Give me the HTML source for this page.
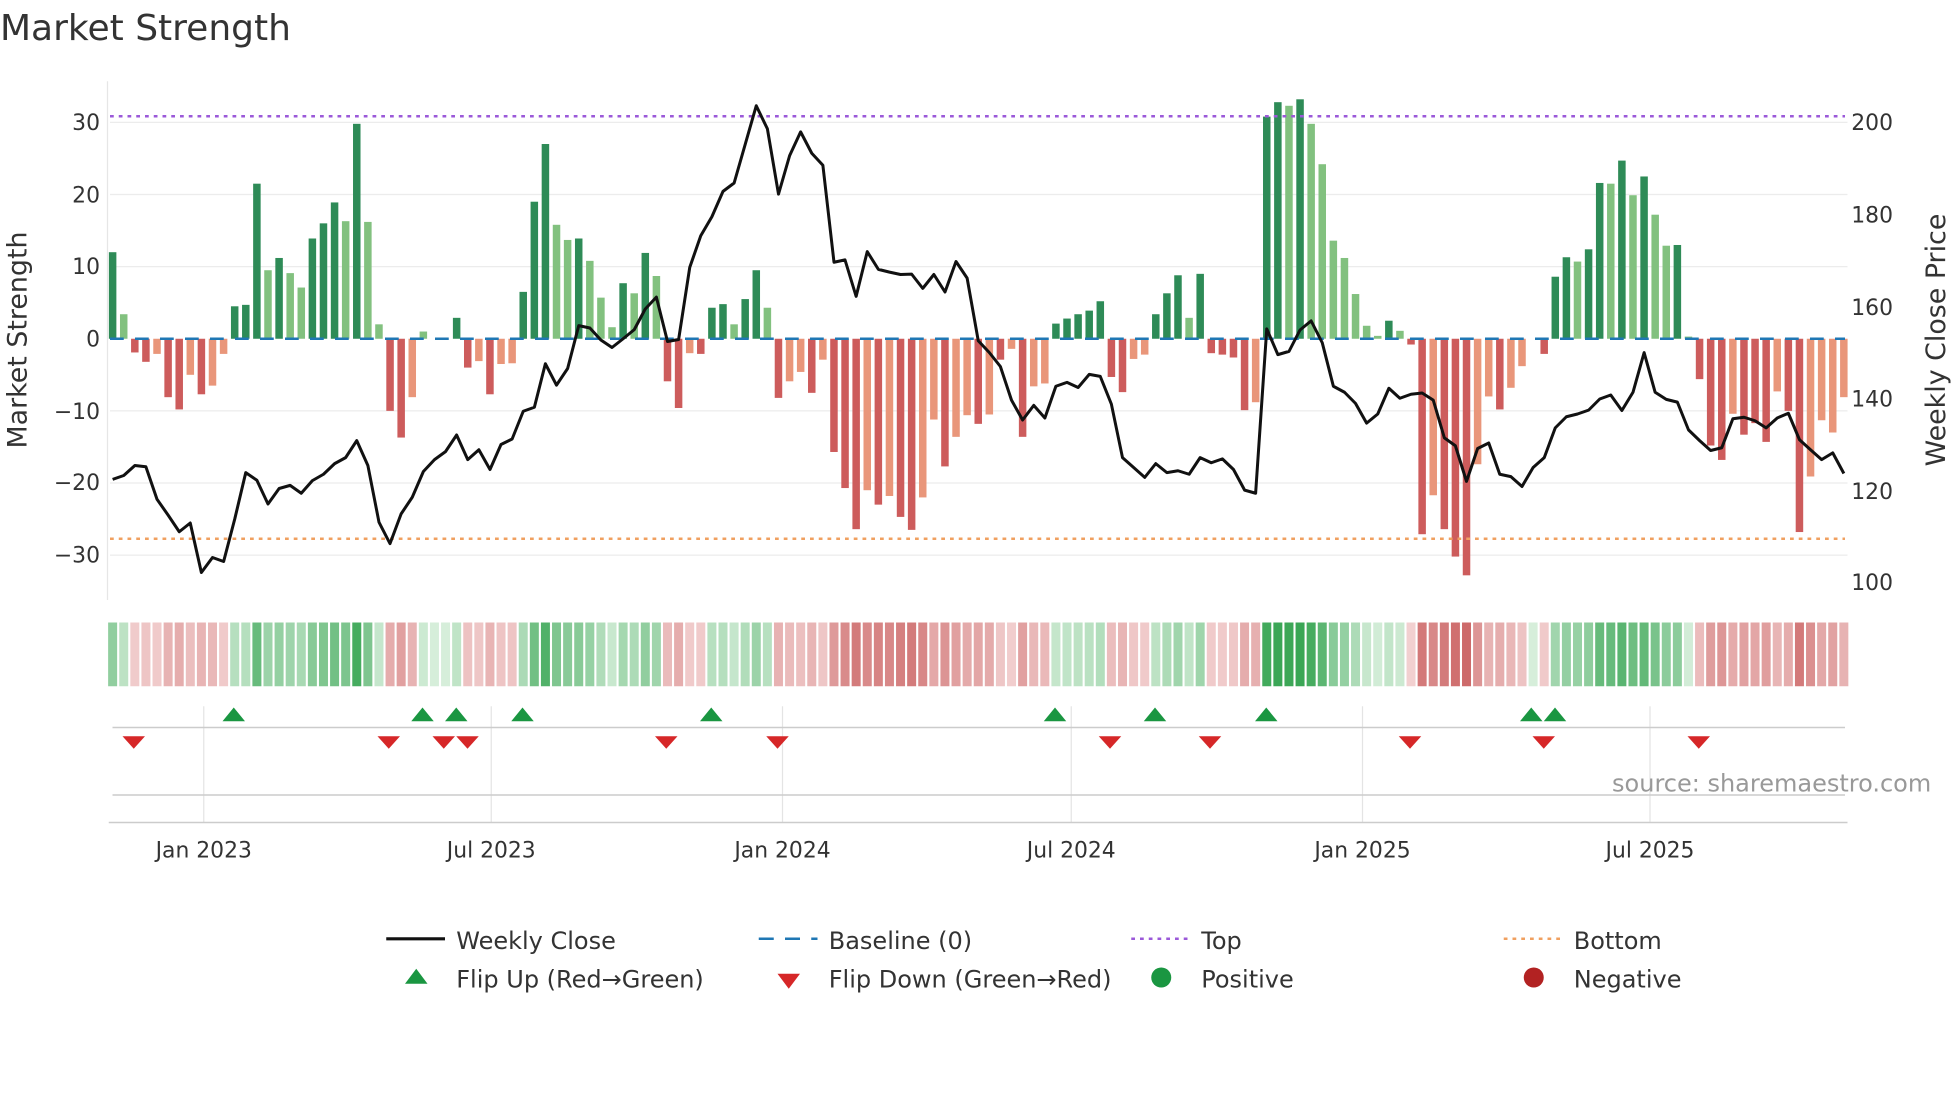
<!DOCTYPE html>
<html><head><meta charset="utf-8"><style>
html,body{margin:0;padding:0;background:#fff;}
svg{display:block;font-family:"DejaVu Sans","Liberation Sans",sans-serif;}
</style></head><body>
<svg id="s" width="1960" height="1102" viewBox="0 0 1568 881.6" xmlns="http://www.w3.org/2000/svg">
<text x="0" y="32" font-size="28.8" fill="#333">Market Strength</text>
<g id="grid" stroke="#ececec" stroke-width="1"></g>
<line x1="86" y1="65" x2="86" y2="480" stroke="#e6e6e6"/>
<g font-size="17.5" fill="#333" text-anchor="end">
<text x="80" y="104">30</text><text x="80" y="162">20</text><text x="80" y="219">10</text><text x="80" y="277">0</text>
<text x="80" y="335">−10</text><text x="80" y="392">−20</text><text x="80" y="450">−30</text>
</g>
<g font-size="17.5" fill="#333">
<text x="1481" y="104">200</text><text x="1481" y="178">180</text><text x="1481" y="252">160</text>
<text x="1481" y="325">140</text><text x="1481" y="399">120</text><text x="1481" y="472">100</text>
</g>
<text transform="translate(21,272) rotate(-90)" font-size="21.5" fill="#333" text-anchor="middle">Market Strength</text>
<text transform="translate(1556,272) rotate(-90)" font-size="21.5" fill="#333" text-anchor="middle">Weekly Close Price</text>
<g id="bars"></g>
<line x1="88" y1="93" x2="1476" y2="93" stroke="#9b59d9" stroke-width="2" stroke-dasharray="3,4"/>
<line x1="88" y1="431" x2="1476" y2="431" stroke="#f0a060" stroke-width="2" stroke-dasharray="3,4"/>
<line x1="88" y1="271" x2="1476" y2="271" stroke="#1f77b4" stroke-width="2" stroke-dasharray="11,9"/>
<polyline id="pl" fill="none" stroke="#111" stroke-width="2.4" stroke-linejoin="round"/>
<g id="heat"></g>
<g stroke="#e4e4e4"><line x1="163" y1="565" x2="163" y2="658"/><line x1="393" y1="565" x2="393" y2="658"/><line x1="626" y1="565" x2="626" y2="658"/><line x1="857" y1="565" x2="857" y2="658"/><line x1="1090" y1="565" x2="1090" y2="658"/><line x1="1320" y1="565" x2="1320" y2="658"/></g>
<line x1="90" y1="582" x2="1476" y2="582" stroke="#ccc" stroke-width="1.2"/>
<line x1="90" y1="636" x2="1476" y2="636" stroke="#ccc" stroke-width="1.2"/>
<line x1="87" y1="658" x2="1478" y2="658" stroke="#ccc" stroke-width="1.2"/>
<g id="mk"></g>
<text x="1545" y="633" font-size="19.2" fill="#999" text-anchor="end">source: sharemaestro.com</text>
<g font-size="17.5" fill="#333" text-anchor="middle">
<text x="163" y="686">Jan 2023</text><text x="393" y="686">Jul 2023</text><text x="626" y="686">Jan 2024</text>
<text x="857" y="686">Jul 2024</text><text x="1090" y="686">Jan 2025</text><text x="1320" y="686">Jul 2025</text>
</g>
<g font-size="19.2" fill="#333">
<line x1="309" y1="751" x2="356" y2="751" stroke="#111" stroke-width="2.5"/><text x="365" y="759">Weekly Close</text>
<line x1="607" y1="751" x2="654" y2="751" stroke="#1f77b4" stroke-width="2" stroke-dasharray="12,9"/><text x="663" y="759">Baseline (0)</text>
<line x1="905" y1="751" x2="952" y2="751" stroke="#9b59d9" stroke-width="2" stroke-dasharray="3,4"/><text x="961" y="759">Top</text>
<line x1="1203" y1="751" x2="1250" y2="751" stroke="#f0a060" stroke-width="2" stroke-dasharray="3,4"/><text x="1259" y="759">Bottom</text>
<polygon points="333,775 342,787 324,787" fill="#1a9641"/><text x="365" y="790">Flip Up (Red→Green)</text>
<polygon points="622,779 640,779 631,791" fill="#d62728"/><text x="663" y="790">Flip Down (Green→Red)</text>
<circle cx="929" cy="782" r="8" fill="#1a9641"/><text x="961" y="790">Positive</text>
<circle cx="1227" cy="782" r="8" fill="#b22222"/><text x="1259" y="790">Negative</text>
</g>
</svg>
<script>
var NS="http://www.w3.org/2000/svg";
function el(t,a,p){var e=document.createElementNS(NS,t);for(var k in a)e.setAttribute(k,a[k]);document.getElementById(p).appendChild(e);return e;}
var V=[12,3.4,-1.9,-3.2,-2.1,-8.1,-9.8,-5,-7.7,-6.5,-2.1,4.5,4.7,21.5,9.5,11.2,9.1,7.1,13.9,16,18.9,16.3,29.8,16.2,2,-10,-13.7,-8.1,1,0,0,2.9,-4,-3.1,-7.7,-3.5,-3.4,6.5,19,27,15.8,13.7,13.9,10.8,5.7,1.6,7.7,6.3,11.9,8.7,-5.9,-9.6,-2,-2.1,4.3,4.8,2,5.5,9.5,4.3,-8.2,-5.9,-4.6,-7.5,-2.9,-15.7,-20.7,-26.4,-21,-23,-21.8,-24.7,-26.5,-22,-11.2,-17.7,-13.6,-10.6,-11.8,-10.5,-2.9,-1.4,-13.6,-6.6,-6.2,2.1,2.8,3.4,3.9,5.2,-5.3,-7.4,-2.8,-2.2,3.4,6.3,8.8,2.9,9,-2,-2.2,-2.6,-9.9,-8.8,30.8,32.8,32.3,33.2,29.8,24.2,13.6,11.2,6.2,1.8,0.4,2.5,1.1,-0.8,-27.1,-21.7,-26.4,-30.2,-32.8,-17.4,-8,-9.8,-6.8,-3.8,0,-2.1,8.6,11.3,10.7,12.4,21.6,21.5,24.7,19.9,22.5,17.2,12.9,13,0.3,-5.6,-14.8,-16.8,-10.4,-13.3,-11.7,-14.3,-7.3,-10,-26.8,-19.1,-11.3,-13,-8.1];
var T="DLRRSRRSRSSDDDLDLLDDDLDLLRRSL00DRSRSSDDDLLDLLLDLDLRRSRDDLDDLRSSRSRRRSRSRRSSRSSRSRSRSSDDDDDRRSSDDDLDRRRRSDDLDLLLLLLLDLRRSRRRSSRSS0RDDLDDLDLDLLDLRRRSRRRSRRSSSS";
var C={D:"#2e8b57",L:"#82c17f",R:"#cd5c5c",S:"#e9967a","0":"#82c17f"};
var Z=[1010,1000,975,978,1060,1100,1142,1120,1245,1207,1217,1110,993,1012,1072,1033,1025,1045,1013,997,970,955,912,975,1118,1172,1097,1055,990,960,940,898,960,935,985,922,908,838,828,718,772,730,622,628,658,677,655,632,580,550,662,657,475,395,347,283,262,165,67,125,290,193,133,187,217,462,456,548,435,480,487,493,492,528,493,537,460,502,660,690,725,810,860,823,855,775,765,778,745,750,820,955,980,1005,970,993,988,997,955,968,958,985,1037,1045,630,695,687,633,610,665,775,790,818,868,845,780,805,795,792,810,905,925,1015,932,918,997,1003,1028,980,955,880,852,845,835,807,797,836,790,690,790,808,815,885,912,937,930,857,853,862,880,855,843,910,935,960,943,995];
[30,20,10,-10,-20,-30].forEach(function(v){var y=271-5.77*v;el("line",{x1:88,y1:y,x2:1478,y2:y},"grid");});
var pts=[];
function mix(a,b,t){var r=[0,1,2].map(function(i){return Math.round(a[i]+(b[i]-a[i])*t)});return "rgb("+r.join(",")+")";}
for(var i=0;i<V.length;i++){
 var x=90.1+8.878*i,v=V[i],t=T[i]||"L";
 var y0=271,y1=271-5.77*v;
 if(Math.abs(v)>0.05)el("rect",{x:x-3,y:Math.min(y0,y1),width:6,height:Math.abs(y1-y0),fill:C[t]},"bars");
 pts.push(x.toFixed(1)+","+(271+(Z[i]-655)*0.317).toFixed(1));
 var f=Math.min(1,Math.abs(v)/33), col;
 if(v>=0)col=mix([214,238,218],[58,166,85],Math.pow(f,0.8));else col=mix([244,214,214],[205,105,105],Math.pow(f,0.8));
 el("rect",{x:x-3.6,y:498,width:7.2,height:51,fill:col},"heat");
}
document.getElementById("pl").setAttribute("points",pts.join(" "));
[187,338,365,418,569,844,924,1013,1225,1244].forEach(function(x){el("polygon",{points:(x)+",566 "+(x+9)+",577 "+(x-9)+",577",fill:"#1a9641"},"mk");});
[107,311,355,374,533,622,888,968,1128,1235,1359].forEach(function(x){el("polygon",{points:(x-9)+",589 "+(x+9)+",589 "+x+",599",fill:"#d62728"},"mk");});
</script>
</body></html>
